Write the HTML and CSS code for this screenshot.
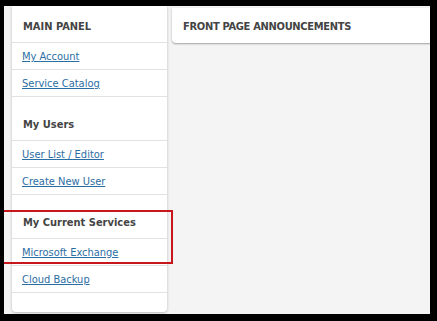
FILE: index.html
```html
<!DOCTYPE html>
<html>
<head>
<meta charset="UTF-8">
<title>Portal</title>
<link rel="stylesheet" href="styles.css">
</head>
<body>

<div id="frame">
	<div id="sidebar">
		<div class="head first">MAIN PANEL</div>
		<div class="item"><a href="#">My Account</a></div>
		<div class="item"><a href="#">Service Catalog</a></div>

		<div class="head">My Users</div>
		<div class="item"><a href="#">User List / Editor</a></div>
		<div class="item"><a href="#">Create New User</a></div>

		<div class="head">My Current Services</div>
		<div class="item"><a href="#">Microsoft Exchange</a></div>
		<div class="item"><a href="#">Cloud Backup</a></div>
	</div>

	<div id="main">
		<div class="panel-head">FRONT PAGE ANNOUNCEMENTS</div>
	</div>

	<div class="mark"></div>
</div>

</body>
</html>
```

FILE: styles.css
```css
*{
	box-sizing: border-box;
}
body{
	margin: 0;
	font-family: "DejaVu Sans Condensed", "DejaVu Sans", sans-serif;
	font-size: 11px;
}
#frame{
	position: relative;
	width: 437px;
	height: 321px;
	border-style: solid;
	border-color: #000;
	border-width: 6px 7px 7px 4px;
	background-color: #f4f4f4;
	display: flex;
	align-items: flex-start;
	padding-left: 8px;
	gap: 5px;
	overflow: hidden;
}
#sidebar{
	width: 155px;
	flex: none;
	height: 306px;
	background-color: #fff;
	border-radius: 0 0 4px 4px;
	box-shadow: 0 1px 3px rgba(0,0,0,0.25);
}
.head{
	font-weight: bold;
	color: #444;
	line-height: 12px;
	padding: 22px 11px 9px;
	border-bottom: 1px solid #e2e2e2;
}
.head.first{
	padding-top: 15px;
	padding-bottom: 9px;
}
.item{
	line-height: 12px;
	padding: 8px 10px 6px;
	border-bottom: 1px solid #e2e2e2;
}
.item a{
	color: #2b6ea3;
	text-decoration: underline;
}
#main{
	flex: 1;
	padding-top: 2px;
}
.panel-head{
	width: calc(100% + 12px);
	height: 35px;
	background-color: #fff;
	border-radius: 0 0 0 4px;
	box-shadow: 0 1px 2px rgba(0,0,0,0.35);
	color: #444;
	font-weight: bold;
	letter-spacing: -0.3px;
	line-height: 12px;
	padding: 13px 11px 0;
}
.mark{
	position: absolute;
	left: -4px;
	top: 204px;
	width: 173px;
	height: 54px;
	border: 2px solid #c8161d;
}
```
